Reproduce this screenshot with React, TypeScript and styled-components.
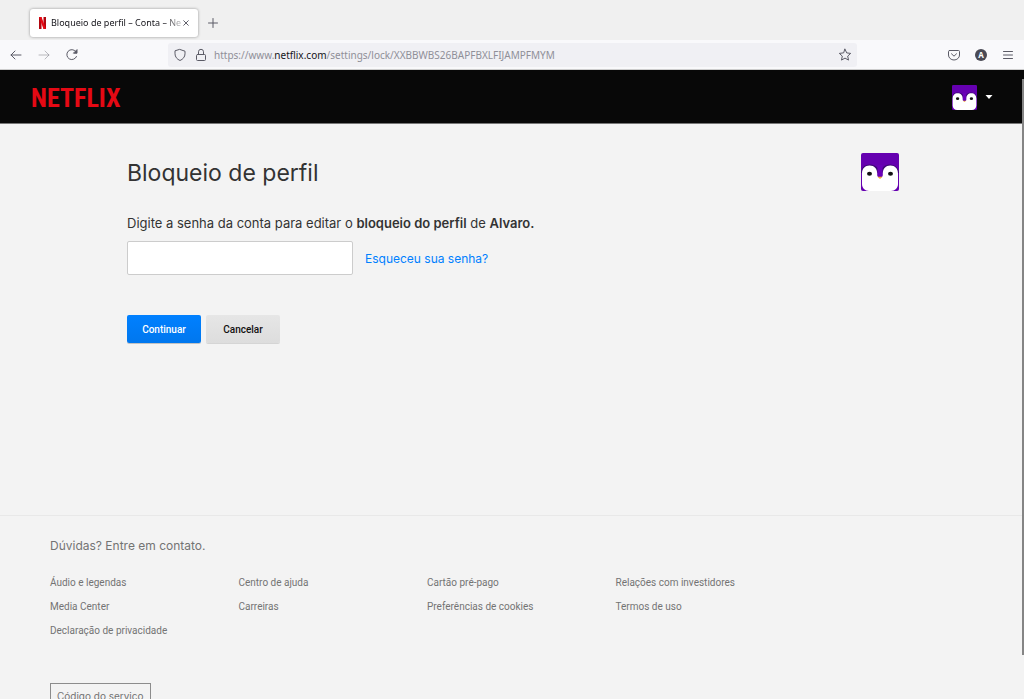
import React from "react";
import styled, { createGlobalStyle } from "styled-components";

const GlobalStyle = createGlobalStyle`
  *, *::before, *::after { box-sizing: border-box; }
  body {
    margin: 0;
    overflow: hidden;
    background: #f3f3f3;
    color: #333;
    font-family: Inter, Roboto, sans-serif;
  }
  h1, p, ul { margin: 0; padding: 0; }
  ul { list-style: none; }
  button, input { font: inherit; }
  svg { display: block; flex: none; }
`;

const smallText = "Roboto, Inter, sans-serif";

const Window = styled.div`
  display: flex;
  flex-direction: column;
  height: 100vh;
  overflow: hidden;
`;

const TabStrip = styled.div`
  display: flex;
  flex: none;
  align-items: center;
  gap: 7px;
  height: 40px;
  padding: 6px 30px 0;
  background: #f0f0f0;
  font-family: "Noto Sans", sans-serif;
`;

const Tab = styled.div`
  display: flex;
  align-items: center;
  width: 168px;
  height: 28px;
  padding: 0 8px;
  background: #fff;
  border-radius: 3px;
  box-shadow: 0 0 3px rgba(0, 0, 0, 0.4);
`;

const TabTitle = styled.span`
  flex: 1;
  margin-left: 4px;
  white-space: nowrap;
  font-size: 9px;
  line-height: 16px;
  color: #15141a;
  mask-image: linear-gradient(to right, #000 86%, rgba(0, 0, 0, 0.2));
`;

const IconButton = styled.button<{ $size?: number }>`
  display: grid;
  flex: none;
  place-items: center;
  width: ${(p) => p.$size ?? 16}px;
  height: ${(p) => p.$size ?? 16}px;
  padding: 0;
  border: 0;
  background: none;
  color: #5b5b66;
`;

const Toolbar = styled.div`
  display: flex;
  flex: none;
  align-items: center;
  height: 30px;
  padding: 0 8px;
  background: #f9f9fb;
  border-bottom: 1px solid #ccc;
`;

const NavButtons = styled.div`
  display: flex;
  flex: none;
  gap: 12px;
  width: 160px;
`;

const AddressBar = styled.div`
  display: flex;
  flex: 1;
  align-items: center;
  gap: 5px;
  height: 24px;
  padding: 0 4px;
  background: #f0f0f4;
  border-radius: 3px;
`;

const Url = styled.span`
  flex: 1;
  font-family: "Noto Sans", sans-serif;
  font-size: 10px;
  line-height: 16px;
  color: #8f8f98;

  b {
    font-weight: 400;
    color: #15141a;
  }
`;

const ToolbarActions = styled.div`
  display: flex;
  flex: none;
  gap: 11px;
  margin-left: 89px;
`;

const Viewport = styled.div`
  position: relative;
  display: flex;
  flex: 1;
  flex-direction: column;
  min-height: 0;
  overflow: hidden;
`;

const ScrollThumb = styled.div`
  position: absolute;
  top: 9px;
  right: 0;
  width: 2px;
  height: 576px;
  background: #858585;
`;

const SiteHeader = styled.header`
  display: flex;
  flex: none;
  align-items: center;
  justify-content: space-between;
  height: 54px;
  padding: 2px 31px 0;
  background: #080808;
  border-bottom: 1px solid #777;
`;

const Wordmark = styled.a`
  font-family: "Roboto Condensed", "Liberation Sans Narrow", "DejaVu Sans Condensed", sans-serif;
  font-size: 26px;
  font-weight: 700;
  line-height: 32px;
  color: #e50914;
  text-decoration: none;
`;

const ProfileMenu = styled.button`
  display: flex;
  align-items: center;
  gap: 8px;
  padding: 0;
  border: 0;
  background: none;
`;

const Main = styled.main`
  flex: none;
  width: 100%;
  max-width: 774px;
  min-height: 391px;
  margin: 0 auto;
  padding: 29px 0 0 2px;
`;

const TitleRow = styled.div`
  display: flex;
  justify-content: space-between;
  margin-bottom: 20px;
`;

const Title = styled.h1`
  font-size: 23px;
  font-weight: 400;
  line-height: 40px;
`;

const PromptLabel = styled.label`
  display: block;
  margin-bottom: 8px;
  font-size: 13px;
  line-height: 20px;

  b { font-weight: 600; }
`;

const FieldRow = styled.div`
  display: flex;
  align-items: center;
  gap: 12px;
  margin-bottom: 40px;
`;

const PasswordInput = styled.input`
  width: 226px;
  height: 34px;
  padding: 0 10px;
  border: 1px solid #ccc;
  border-radius: 2px;
  background: #fff;
`;

const ForgotLink = styled.a`
  padding-top: 2px;
  font-size: 12px;
  line-height: 16px;
  color: #0080ff;
  text-decoration: none;
`;

const Actions = styled.div`
  display: flex;
  gap: 5px;
`;

const ActionButton = styled.button<{ $primary?: boolean }>`
  width: 74px;
  height: 28px;
  padding: 0;
  border: 0;
  border-radius: 2px;
  font-family: ${smallText};
  font-size: 10px;
  font-weight: 500;
  color: ${(p) => (p.$primary ? "#fff" : "#111")};
  background: ${(p) =>
    p.$primary
      ? "linear-gradient(#0080ff, #0077ee)"
      : "linear-gradient(#e6e6e6, #dddddd)"};
  box-shadow: 0 1px 0 ${(p) => (p.$primary ? "rgba(0, 0, 0, 0.2)" : "rgba(0, 0, 0, 0.12)")};
`;

const SiteFooter = styled.footer`
  flex: none;
  padding: 20px 50px;
  border-top: 1px solid #e8e8e8;
  color: #737373;

  a {
    color: inherit;
    text-decoration: none;
  }
`;

const ContactLine = styled.p`
  margin-bottom: 19px;
  font-size: 12px;
  line-height: 20px;
`;

const FooterLinks = styled.ul`
  display: grid;
  grid-template-columns: repeat(4, 1fr);
  row-gap: 8px;
  max-width: 754px;
  margin-bottom: 44px;
  font-family: ${smallText};
  font-size: 10px;
  line-height: 16px;
`;

const ServiceCode = styled.button`
  height: 26px;
  padding: 0 6px;
  border: 1px solid #8c8c8c;
  background: none;
  font-size: 10px;
  color: #737373;
`;

type IconProps = { size?: number; children: React.ReactNode };

const LineIcon = ({ size = 14, children }: IconProps) => (
  <svg
    width={size}
    height={size}
    viewBox="0 0 14 14"
    fill="none"
    stroke="currentColor"
    strokeWidth="1"
    strokeLinecap="round"
    strokeLinejoin="round"
    aria-hidden="true"
  >
    {children}
  </svg>
);

const Penguin = ({ size }: { size: number }) => (
  <svg width={size} height={size} viewBox="0 0 38 38" aria-hidden="true">
    <rect width="38" height="38" rx="2" fill="#6500b0" />
    <path d="M0 20c0-5 3.500-8.500 8.500-8.500S17 14 17.500 17v8h3v-8c.5-3 4-5.500 8.500-5.500S38 15 38 20Z" fill="#3d0875" />
    <rect x="16.500" y="12" width="5" height="12" fill="#6a00b8" />
    <path
      d="M1 20.500C1 15.500 4 12.500 8.600 12.500s7.600 3 7.600 8V22c0 1.500 1 2.500 2.800 2.500s2.800-1 2.800-2.500v-1.500c0-5 3-8 7.600-8s7.600 3 7.600 8V31c0 4-3 7-7 7H8c-4 0-7-3-7-7Z"
      fill="#fff"
    />
    <ellipse cx="8.500" cy="20.800" rx="2.500" ry="2" fill="#111" />
    <ellipse cx="29.500" cy="20.800" rx="2.500" ry="2" fill="#111" />
    <path d="M16.500 23.800h5L19 26Z" fill="#f2a93b" />
  </svg>
);

const footerLinks = [
  "Áudio e legendas",
  "Centro de ajuda",
  "Cartão pré-pago",
  "Relações com investidores",
  "Media Center",
  "Carreiras",
  "Preferências de cookies",
  "Termos de uso",
  "Declaração de privacidade",
];

export default function App() {
  return (
    <Window>
      <GlobalStyle />
      <TabStrip>
        <Tab>
          <svg width="9" height="12" viewBox="0 0 9 12" aria-hidden="true">
            <rect x="1" width="2.500" height="12" fill="#b1060f" />
            <rect x="5.500" width="2.500" height="12" fill="#b1060f" />
            <path d="M1 0h2.500L8 12H5.500Z" fill="#e50914" />
          </svg>
          <TabTitle>Bloqueio de perfil – Conta – Ne</TabTitle>
          <IconButton $size={8} aria-label="Fechar aba">
            <LineIcon size={8}>
              <path d="M3 3l8 8M11 3L3 11" strokeWidth="1.700" />
            </LineIcon>
          </IconButton>
        </Tab>
        <IconButton aria-label="Nova aba">
          <LineIcon>
            <path d="M7 2.500v9M2.500 7h9" />
          </LineIcon>
        </IconButton>
      </TabStrip>

      <Toolbar>
        <NavButtons>
          <IconButton aria-label="Voltar">
            <LineIcon>
              <path d="M12 7H2M6 3L2 7l4 4" />
            </LineIcon>
          </IconButton>
          <IconButton aria-label="Avançar" disabled>
            <LineIcon>
              <path d="M2 7h10M8 3l4 4-4 4" opacity="0.400" />
            </LineIcon>
          </IconButton>
          <IconButton aria-label="Recarregar">
            <LineIcon>
              <path d="M11.500 8.500A5 5 0 1 1 10.800 3.500" />
              <path d="M12 2v3.200H8.800Z" fill="currentColor" />
            </LineIcon>
          </IconButton>
        </NavButtons>
        <AddressBar>
          <IconButton aria-label="Proteção">
            <LineIcon>
              <path d="M7 1.500l5 1.700v2.600c0 3-2 5.500-5 6.700-3-1.200-5-3.700-5-6.700V3.200Z" />
            </LineIcon>
          </IconButton>
          <IconButton aria-label="Conexão segura">
            <LineIcon>
              <rect x="2.500" y="6.500" width="9" height="6" rx="1" />
              <path d="M4.500 6.500V3.800a2.500 2.500 0 0 1 5 0v2.700" />
            </LineIcon>
          </IconButton>
          <Url>
            https://www.<b>netflix.com</b>/settings/lock/XXBBWBS26BAPFBXLFIJAMPFMYM
          </Url>
          <IconButton aria-label="Favoritar">
            <LineIcon>
              <path d="M7 1.200l1.700 3.700 4 .5-3 2.700.8 4L7 10.100l-3.500 2 .8-4-3-2.700 4-.5Z" />
            </LineIcon>
          </IconButton>
        </AddressBar>
        <ToolbarActions>
          <IconButton aria-label="Pocket">
            <LineIcon>
              <path d="M2.500 2.500h9a1 1 0 0 1 1 1V7a5.500 5 0 0 1-11 0V3.500a1 1 0 0 1 1-1Z" />
              <path d="M4.500 5.800L7 8.200l2.500-2.400" />
            </LineIcon>
          </IconButton>
          <IconButton aria-label="Conta">
            <svg width="12" height="12" viewBox="0 0 12 12" aria-hidden="true">
              <circle cx="6" cy="6" r="6" fill="#4a4a55" />
              <text x="6" y="9" textAnchor="middle" fontSize="8" fontWeight="700" fontFamily="Noto Sans, sans-serif" fill="#fff">
                A
              </text>
            </svg>
          </IconButton>
          <IconButton aria-label="Menu">
            <LineIcon>
              <path d="M2.500 3.500h9M2.500 7h9M2.500 10.500h9" />
            </LineIcon>
          </IconButton>
        </ToolbarActions>
      </Toolbar>

      <Viewport>
        <SiteHeader>
          <Wordmark href="#">NETFLIX</Wordmark>
          <ProfileMenu aria-label="Perfil">
            <Penguin size={25} />
            <svg width="8" height="5" viewBox="0 0 8 5" aria-hidden="true">
              <path d="M0.500 0h7L4 4Z" fill="#fff" />
            </svg>
          </ProfileMenu>
        </SiteHeader>

        <Main>
          <TitleRow>
            <Title>Bloqueio de perfil</Title>
            <Penguin size={38} />
          </TitleRow>
          <PromptLabel htmlFor="password">
            Digite a senha da conta para editar o <b>bloqueio do perfil</b> de <b>Alvaro.</b>
          </PromptLabel>
          <FieldRow>
            <PasswordInput id="password" type="password" />
            <ForgotLink href="#">Esqueceu sua senha?</ForgotLink>
          </FieldRow>
          <Actions>
            <ActionButton $primary>Continuar</ActionButton>
            <ActionButton>Cancelar</ActionButton>
          </Actions>
        </Main>

        <SiteFooter>
          <ContactLine>
            <a href="#">Dúvidas? Entre em contato.</a>
          </ContactLine>
          <FooterLinks>
            {footerLinks.map((label) => (
              <li key={label}>
                <a href="#">{label}</a>
              </li>
            ))}
          </FooterLinks>
          <ServiceCode>Código do serviço</ServiceCode>
        </SiteFooter>
        <ScrollThumb />
      </Viewport>
    </Window>
  );
}
